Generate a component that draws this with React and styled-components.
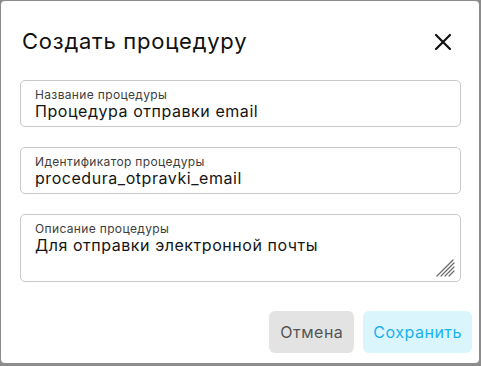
import React from "react";
import styled, { createGlobalStyle } from "styled-components";

const GlobalStyle = createGlobalStyle`
  html, body {
    margin: 0;
    padding: 0;
    background: #8c8c8c;
    font-family: Inter, "Noto Sans", sans-serif;
  }
`;

const Dialog = styled.div`
  box-sizing: border-box;
  margin: 1px 0 0 1px;
  width: 478px;
  height: 362px;
  background: #ffffff;
  border-radius: 4px;
  display: flex;
  flex-direction: column;
  padding: 27px 18px 10px 19px;
`;

const Header = styled.div`
  display: flex;
  align-items: center;
  justify-content: space-between;
  padding-left: 2px;
  margin-bottom: 25px;
`;

const Title = styled.h2`
  margin: 0;
  font-size: 22px;
  font-weight: 400;
  line-height: 27px;
  letter-spacing: 0.75px;
  color: #111;
`;

const CloseButton = styled.button`
  border: 0;
  background: none;
  padding: 0;
  margin-right: 8px;
  width: 20px;
  height: 20px;
  display: flex;
  align-items: center;
  justify-content: center;
  cursor: pointer;
`;

const Fields = styled.div`
  display: flex;
  flex-direction: column;
  gap: 20px;
`;

const Field = styled.div`
  position: relative;
  box-sizing: border-box;
  height: ${(p) => p.$height}px;
  border: 1px solid #c9c9c9;
  border-radius: 5px;
  padding: 7px 14px 0 14px;
`;

const Label = styled.div`
  font-size: 12px;
  line-height: 14px;
  letter-spacing: 0.35px;
  color: #3d3d3d;
`;

const Value = styled.div`
  font-size: 16px;
  line-height: 18px;
  letter-spacing: 0.55px;
  color: #151515;
`;

const Grip = styled.svg`
  position: absolute;
  right: 4px;
  bottom: 4px;
`;

const Footer = styled.div`
  margin-top: auto;
  display: flex;
  justify-content: flex-end;
  gap: 9px;
  margin-right: -11px;
`;

const Button = styled.button`
  height: 42px;
  padding: 0 ${(p) => (p.$primary ? 10 : 11)}px;
  border: 0;
  border-radius: 6px;
  font-family: Inter, "Noto Sans", sans-serif;
  font-size: 16px;
  letter-spacing: 0.5px;
  background: ${(p) => (p.$primary ? "#dbf5fd" : "#e3e3e3")};
  color: ${(p) => (p.$primary ? "#17b2f2" : "#555555")};
  cursor: pointer;
`;

export default function App() {
  return (
    <>
      <GlobalStyle />
      <Dialog>
        <Header>
          <Title>Создать процедуру</Title>
          <CloseButton aria-label="close">
            <svg width="18" height="18" viewBox="0 0 18 18">
              <path d="M2 2 L16 16 M16 2 L2 16" stroke="#111" strokeWidth="2.2" strokeLinecap="round" />
            </svg>
          </CloseButton>
        </Header>
        <Fields>
          <Field $height={47}>
            <Label>Название процедуры</Label>
            <Value>Процедура отправки email</Value>
          </Field>
          <Field $height={47}>
            <Label>Идентификатор процедуры</Label>
            <Value>procedura_otpravki_email</Value>
          </Field>
          <Field $height={68}>
            <Label>Описание процедуры</Label>
            <Value>Для отправки электронной почты</Value>
            <Grip width="20" height="20" viewBox="0 0 20 20">
              <path
                d="M1 19 L17 3 M5 19 L18 6 M9 19 L18 10 M13 19 L18 14"
                stroke="#6a6a6a"
                strokeWidth="1.2"
                strokeLinecap="round"
              />
            </Grip>
          </Field>
        </Fields>
        <Footer>
          <Button>Отмена</Button>
          <Button $primary>Сохранить</Button>
        </Footer>
      </Dialog>
    </>
  );
}
